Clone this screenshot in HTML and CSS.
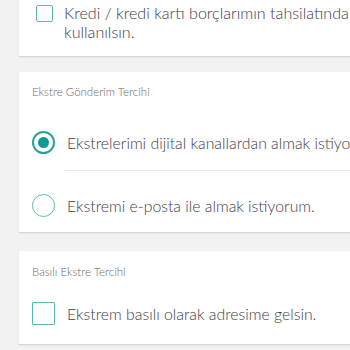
FILE: index.html
```html
<!DOCTYPE html>
<html lang="tr">
<head>
<meta charset="utf-8">
<link rel="stylesheet" href="styles.css">
</head>
<body>
<div class="page">
  <section class="card card-first">
    <label class="check-row check-row-small">
      <span class="box box-small"></span>
      <span class="label-text label-wrap">Kredi / kredi kartı borçlarımın tahsilatında kullanılsın.</span>
    </label>
  </section>

  <section class="card card-second">
    <div class="card-title">Ekstre Gönderim Tercihi</div>
    <label class="option option-first">
      <span class="radio checked"><span class="dot"></span></span>
      <span class="label-text">Ekstrelerimi dijital kanallardan almak istiyorum.</span>
    </label>
    <div class="divider"></div>
    <label class="option option-second">
      <span class="radio"></span>
      <span class="label-text">Ekstremi e-posta ile almak istiyorum.</span>
    </label>
  </section>

  <section class="card card-third">
    <div class="card-title">Basılı Ekstre Tercihi</div>
    <label class="option option-check">
      <span class="box"></span>
      <span class="label-text">Ekstrem basılı olarak adresime gelsin.</span>
    </label>
  </section>
</div>
</body>
</html>
```

FILE: styles.css
```css
html, body {
  margin: 0;
  padding: 0;
}
body {
  background: #f2f2f2;
  font-family: Lato, "Noto Sans", sans-serif;
  font-weight: 300;
  color: #3f3b47;
  overflow: hidden;
  width: 350px;
  height: 350px;
}
.page {
  padding-left: 19px;
  display: flex;
  flex-direction: column;
}
.card {
  background: #ffffff;
  width: 380px;
  box-shadow: 0 1px 0 #d6d6d6, 0 2px 2px rgba(0,0,0,0.05);
}
.card-first {
  padding: 3px 0 15px 0;
}
.card-second {
  margin-top: 16px;
  padding: 13px 0 15px 0;
}
.card-third {
  margin-top: 19px;
  padding: 14px 0 19px 0;
}
.check-row {
  display: flex;
  align-items: flex-start;
}
.check-row-small {
  padding-left: 17px;
  gap: 11px;
}
.box {
  flex: none;
  width: 21px;
  height: 21px;
  border: 1px solid #5bb9b2;
  border-radius: 1px;
  background: #fff;
}
.box-small {
  width: 15px;
  height: 15px;
  margin-top: 2px;
  border-radius: 2px;
}
.label-text {
  font-size: 15.8px;
  line-height: 19px;
}
.label-wrap {
  font-size: 16.1px;
  width: 300px;
}
.card-title {
  padding-left: 13px;
  font-size: 11.5px;
  line-height: 14px;
  color: #6a6a6a;
}
.option {
  display: flex;
  align-items: center;
  padding-left: 13px;
  gap: 12px;
}
.option .label-text {
  white-space: nowrap;
}
.option-first {
  margin-top: 32px;
}
.divider {
  margin: 16px 0 0 46px;
  height: 1px;
  background: #e9e9e9;
}
.option-second {
  margin-top: 23px;
}
.option-check {
  margin-top: 23px;
}
.radio {
  flex: none;
  width: 21px;
  height: 21px;
  border: 1px solid #5bb9b2;
  border-radius: 50%;
  display: flex;
  align-items: center;
  justify-content: center;
  box-sizing: content-box;
}
.radio.checked {
  border: 2px solid #2aa29a;
  width: 19px;
  height: 19px;
}
.dot {
  width: 11px;
  height: 11px;
  border-radius: 50%;
  background: #0c9a92;
}
```
